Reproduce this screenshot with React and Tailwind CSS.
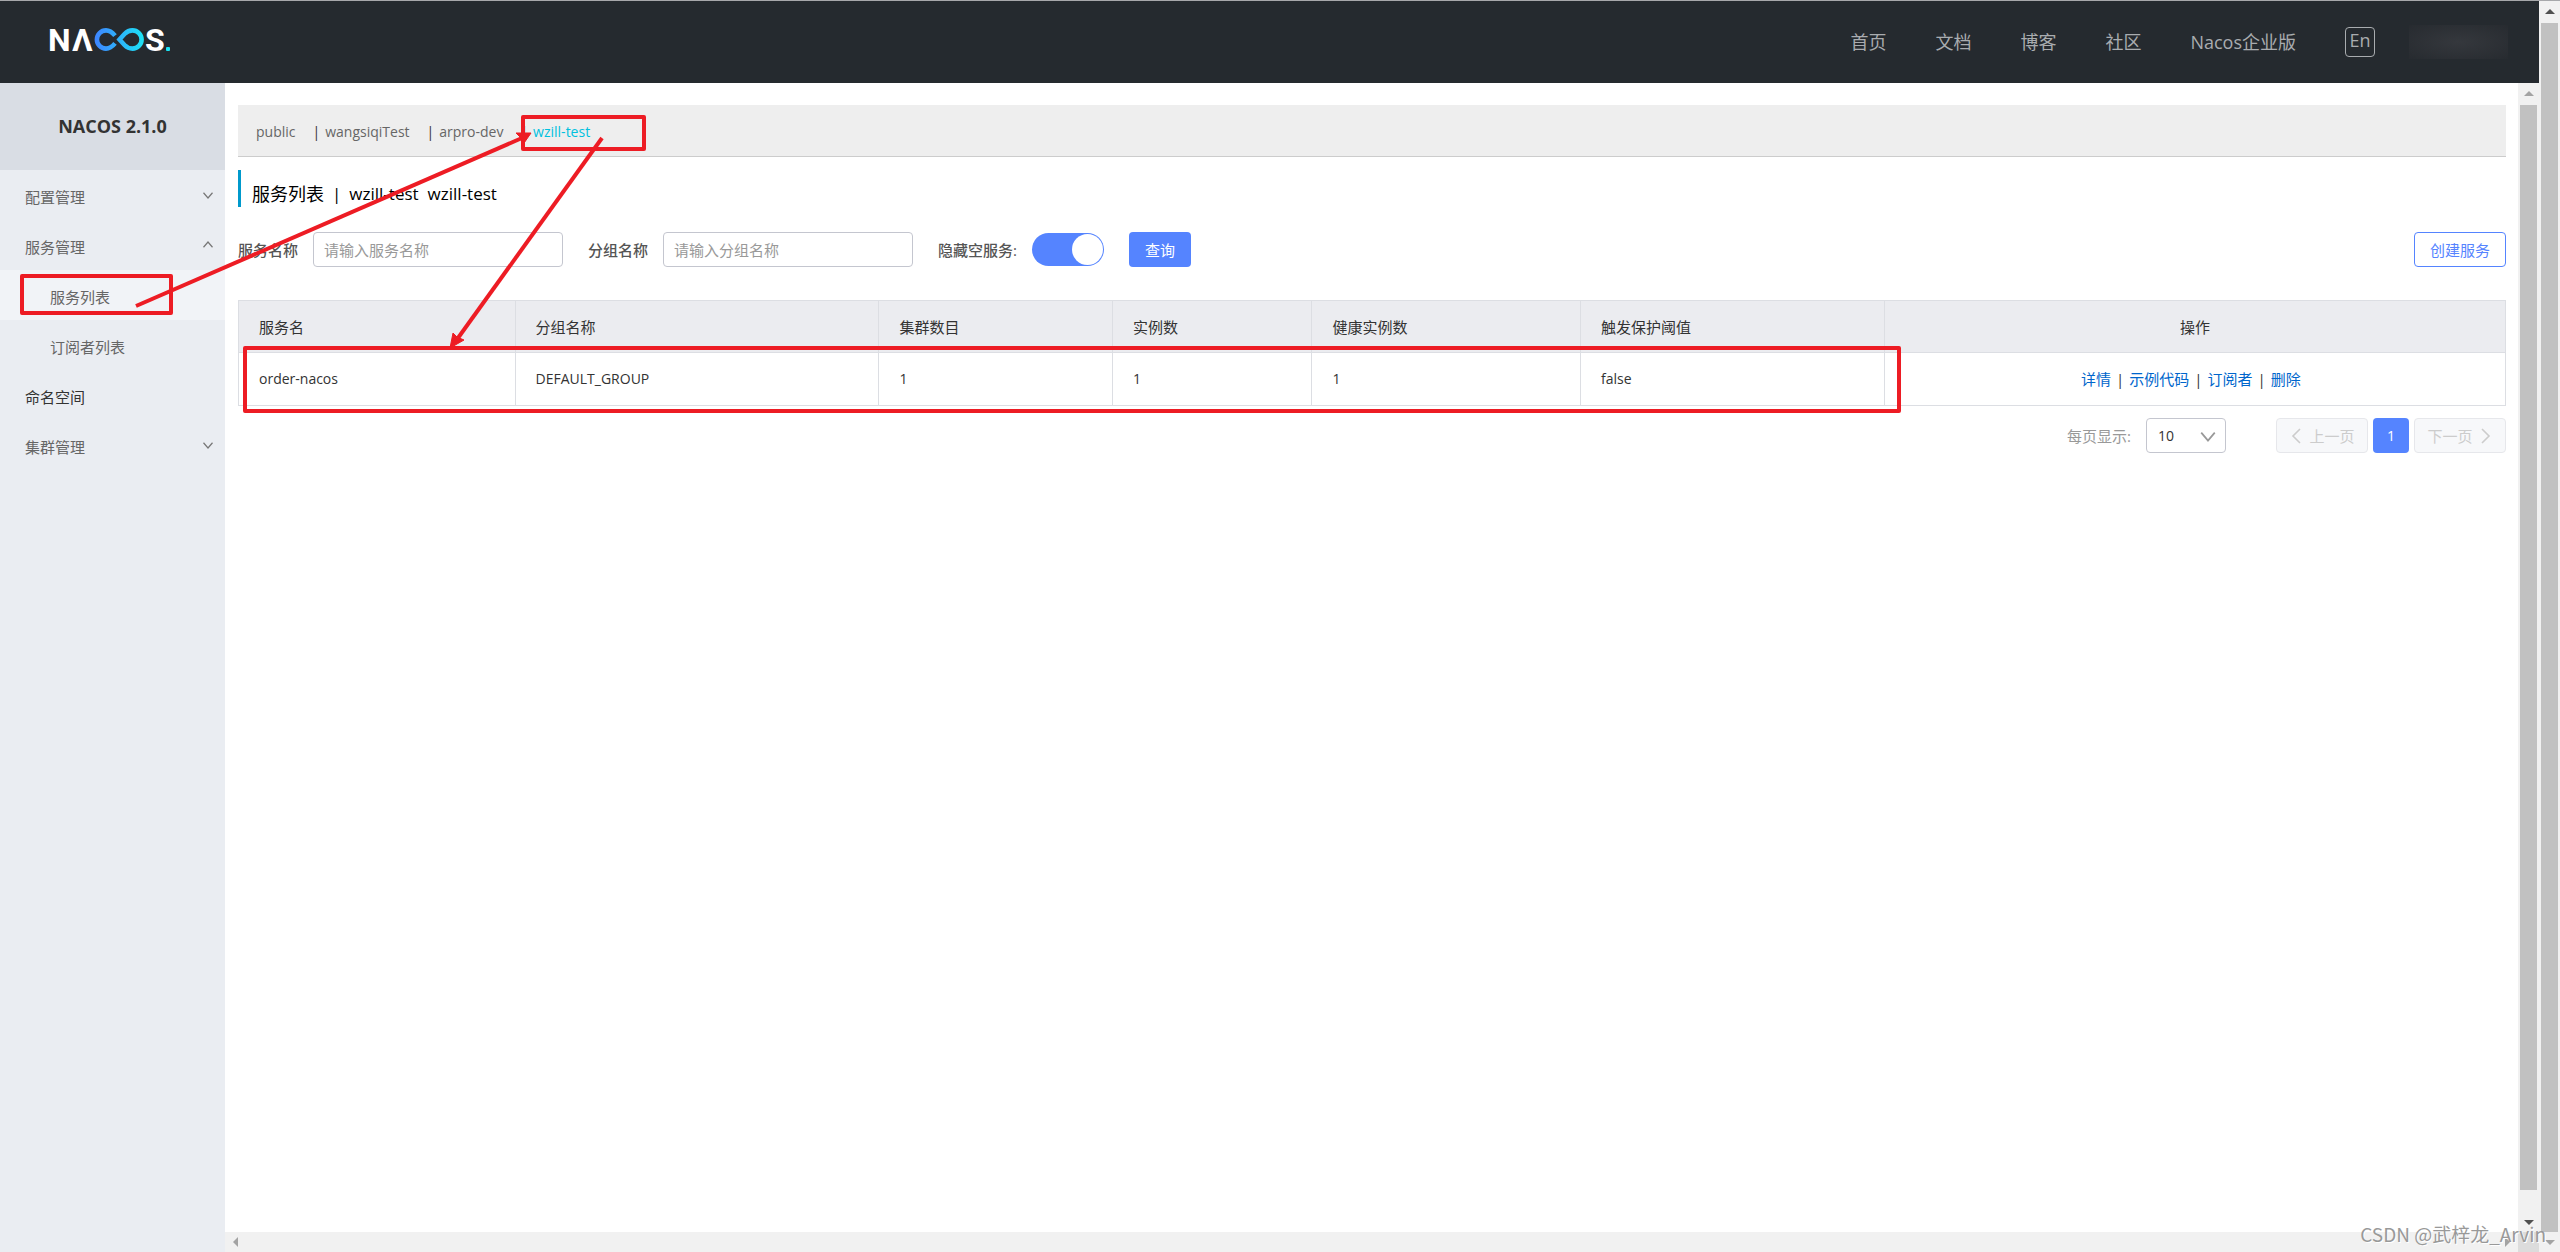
import { useState } from 'react'

const navLinks = ['首页', '文档', '博客', '社区', 'Nacos企业版']

const menus = [
  { name: '配置管理', arrow: 'down' },
  { name: '服务管理', arrow: 'up' },
  { name: '服务列表', sub: true, active: true },
  { name: '订阅者列表', sub: true },
  { name: '命名空间', dark: true },
  { name: '集群管理', arrow: 'down' },
]

const namespaces = ['public', 'wangsiqiTest', 'arpro-dev', 'wzill-test']

const columns = [
  { title: '服务名', key: 'name', width: 'w-[12.2%]' },
  { title: '分组名称', key: 'groupName', width: 'w-[16.05%]' },
  { title: '集群数目', key: 'clusterCount', width: 'w-[10.3%]' },
  { title: '实例数', key: 'ipCount', width: 'w-[8.8%]' },
  { title: '健康实例数', key: 'healthyInstanceCount', width: 'w-[11.85%]' },
  { title: '触发保护阈值', key: 'triggerFlag', width: 'w-[13.4%]' },
]

const services = [
  {
    name: 'order-nacos',
    groupName: 'DEFAULT_GROUP',
    clusterCount: 1,
    ipCount: 1,
    healthyInstanceCount: 1,
    triggerFlag: 'false',
  },
]

const operations = ['详情', '示例代码', '订阅者', '删除']

function Chevron({ dir, className }) {
  const paths = {
    down: 'M2 5 L8 12 L14 5',
    up: 'M2 11 L8 4 L14 11',
    left: 'M11 1 L4 8 L11 15',
    right: 'M5 1 L12 8 L5 15',
  }
  return (
    <svg viewBox="0 0 16 16" className={className} fill="none" stroke="currentColor" strokeWidth="1.6" aria-hidden="true">
      <path d={paths[dir]} />
    </svg>
  )
}

function Logo() {
  return (
    <svg viewBox="0 0 122 24" className="h-6 w-[122px] overflow-visible" role="img" aria-label="NACOS">
      <defs>
        <linearGradient id="loop" x1="44" x2="95" y1="0" y2="0" gradientUnits="userSpaceOnUse">
          <stop offset="0" stopColor="#3f83ff" />
          <stop offset="1" stopColor="#1be4f5" />
        </linearGradient>
      </defs>
      <g className="fill-white font-['Roboto',sans-serif] text-[32px] font-bold">
        <text x="-2" y="23">N</text>
        <text x="22" y="23">Λ</text>
        <text x="95" y="23">S</text>
      </g>
      <g fill="none" stroke="url(#loop)" strokeWidth="4.6">
        <path d="M65 7.6 C62 4 59.5 2.4 56 2.4 A9.1 9.1 0 1 0 56 20.6 C59.5 20.6 62 19 65 15.4" />
        <path d="M69.5 11.5 L74.5 6 C77 3.4 79.5 2.4 82.5 2.4 A9.1 9.1 0 1 1 82.5 20.6 C79.5 20.6 77 19.6 74.5 17 Z" />
      </g>
      <rect x="116" y="19" width="4" height="4" rx="1" fill="#1be4f5" />
    </svg>
  )
}

function Triangle({ dir, className }) {
  const points = {
    up: '0,7 5,2 10,7',
    down: '0,3 5,8 10,3',
    left: '7,0 2,5 7,10',
    right: '3,0 8,5 3,10',
  }
  return (
    <svg viewBox="0 0 10 10" className={'size-[10px] shrink-0 ' + className} fill="currentColor" aria-hidden="true">
      <polygon points={points[dir]} />
    </svg>
  )
}

function VerticalScrollbar({ upColor, downColor, thumb }) {
  return (
    <div className="flex w-[21px] shrink-0 flex-col items-center bg-[#f1f1f1]">
      <div className="flex h-[22px] items-center"><Triangle dir="up" className={upColor} /></div>
      <div className="flex w-full flex-1 flex-col px-[2px]">
        <div className={'bg-[#c1c1c1] ' + thumb} />
      </div>
      <div className="flex h-5 items-center"><Triangle dir="down" className={downColor} /></div>
    </div>
  )
}

function Header() {
  return (
    <header className="flex h-[82px] shrink-0 items-center justify-between bg-[#252a2f] pr-[31px] pb-px pl-[50px]">
      <a href="#" className="block pb-1"><Logo /></a>
      <nav className="flex items-center text-[18px] text-[#a9acaf]">
        {navLinks.map((l) => (
          <a key={l} href="#" className="mr-[49px]">{l}</a>
        ))}
        <button className="mr-[34px] h-[30px] w-[30px] rounded-sm border border-[#a9acaf] pb-1 text-[18px] leading-6">En</button>
        <div className="h-[34px] w-[99px] bg-radial from-[#35383d] to-[#272b30]" />
      </nav>
    </header>
  )
}

function Sidebar() {
  return (
    <aside className="w-[225px] shrink-0 bg-[#eaedf2]">
      <h1 className="flex h-[87px] items-center justify-center bg-[#d9dde4] pb-[2px] text-[18px] font-bold text-[#333]">NACOS 2.1.0</h1>
      <ul>
        {menus.map((m) => (
          <li key={m.name} className={m.active ? 'bg-[#f1f3f7]' : ''}>
            <a
              href="#"
              className={
                'flex h-[50px] items-center justify-between pt-1 pr-[11px] ' +
                (m.sub ? 'pl-[50px] ' : 'pl-[25px] ') +
                (m.dark ? 'text-[#333]' : 'text-[#666]')
              }
            >
              {m.name}
              {m.arrow && <Chevron dir={m.arrow} className="mb-1 size-3 text-[#777]" />}
            </a>
          </li>
        ))}
      </ul>
    </aside>
  )
}

function Filters() {
  const [hideEmpty, setHideEmpty] = useState(true)
  const input = 'h-[35px] w-[250px] rounded-[4px] border border-[#c4c6cf] bg-white px-[10px] placeholder:text-[#999] focus:outline-none'
  return (
    <form className="mt-[25px] flex h-[35px] items-center" onSubmit={(e) => e.preventDefault()}>
      <label htmlFor="serviceName" className="mr-[15px] font-medium text-[#555]">服务名称</label>
      <input id="serviceName" className={input} placeholder="请输入服务名称" />
      <label htmlFor="groupName" className="mr-[15px] ml-[25px] font-medium text-[#555]">分组名称</label>
      <input id="groupName" className={input} placeholder="请输入分组名称" />
      <label htmlFor="hideEmpty" className="mr-[15px] ml-[25px] font-medium text-[#555]">隐藏空服务:</label>
      <input
        id="hideEmpty"
        type="checkbox"
        checked={hideEmpty}
        onChange={(e) => setHideEmpty(e.target.checked)}
        className="flex h-[33px] w-[72px] appearance-none items-center rounded-full bg-[#c4c6cf] px-px before:size-[31px] before:rounded-full before:bg-white checked:justify-end checked:bg-[#5584ff]"
      />
      <button className="ml-[25px] h-[35px] w-[62px] rounded-[4px] bg-[#5584ff] text-white">查询</button>
      <button type="button" className="ml-auto h-[35px] w-[92px] rounded-[4px] border border-[#5584ff] bg-white text-[#5584ff]">创建服务</button>
    </form>
  )
}

function ServiceTable() {
  const cell = 'border border-[#dcdee3] px-5 text-left font-normal '
  return (
    <table className="mt-[33px] w-full table-fixed border-collapse text-[#333]">
      <thead>
        <tr className="h-[52px] bg-[#ebecf0]">
          {columns.map((c) => (
            <th key={c.key} className={cell + c.width}>{c.title}</th>
          ))}
          <th className="border border-[#dcdee3] text-center font-normal">操作</th>
        </tr>
      </thead>
      <tbody>
        {services.map((s) => (
          <tr key={s.name} className="h-[53px]">
            {columns.map((c) => (
              <td key={c.key} className={cell + 'text-sm'}>{s[c.key]}</td>
            ))}
            <td className="border border-[#dcdee3] pr-2 text-center">
              {operations.map((o, i) => (
                <span key={o}>
                  {i > 0 && <span className="mx-[5px]">|</span>}
                  <a href="#" className="text-[#06c]">{o}</a>
                </span>
              ))}
            </td>
          </tr>
        ))}
      </tbody>
    </table>
  )
}

function Pagination() {
  const disabled = 'flex h-[35px] w-[92px] items-center justify-center gap-1 rounded-[4px] border border-[#e6e7eb] bg-[#f7f8fa] text-[#ccc]'
  return (
    <div className="mt-3 flex items-center justify-end gap-[5px]">
      <label htmlFor="pageSize" className="mr-[10px] text-[#999]">每页显示:</label>
      <div className="relative mr-[45px]">
        <select id="pageSize" className="h-[35px] w-20 appearance-none rounded-[4px] border border-[#c4c6cf] bg-white px-[11px] text-sm text-[#333]">
          <option>10</option>
          <option>20</option>
          <option>50</option>
        </select>
        <Chevron dir="down" className="pointer-events-none absolute top-[9px] right-[9px] size-[18px] text-[#999]" />
      </div>
      <button disabled className={disabled}><Chevron dir="left" className="size-4" />上一页</button>
      <button className="h-[35px] w-9 rounded-[4px] bg-[#5584ff] text-sm text-white">1</button>
      <button disabled className={disabled}>下一页<Chevron dir="right" className="size-4" /></button>
    </div>
  )
}

// red boxes and arrows drawn over the console
function Annotations() {
  return (
    <svg viewBox="0 0 2560 1252" width="2560" height="1252" className="pointer-events-none absolute top-0 left-0" fill="none" stroke="#ed1c24" strokeWidth="4" strokeLinejoin="round" aria-hidden="true">
      <rect x="22" y="276" width="149" height="37" />
      <rect x="523" y="117" width="121" height="32" />
      <rect x="245" y="348" width="1654" height="63" />
      <path d="M136 306 L522 138" />
      <path d="M602 138 L458 338" />
      <path d="M531 133 L516 133 L521 138 L522 146 Z" fill="#ed1c24" strokeWidth="1" />
      <path d="M450 348 L453 333 L457 337 L464 340 Z" fill="#ed1c24" strokeWidth="1" />
    </svg>
  )
}

export default function App() {
  const [current, setCurrent] = useState('wzill-test')
  return (
    <div className="relative flex h-screen w-full flex-col overflow-hidden bg-white font-['Open_Sans','Noto_Sans_CJK_SC',sans-serif] text-[15px] leading-5">
      <div className="h-px shrink-0 bg-[#a7a8ab]" />
      <div className="flex min-h-0 flex-1">
        <div className="flex min-w-0 flex-1 flex-col">
          <Header />
          <div className="flex min-h-0 flex-1">
            <Sidebar />
            <div className="flex min-w-0 flex-1 flex-col">
              <div className="flex min-h-0 flex-1">
                <main className="min-w-0 flex-1 pt-[22px] pr-3 pl-[13px]">
                  <div className="flex h-[52px] items-center border-b border-[#ccc] bg-[#eee] pt-[3px] pl-[18px] text-sm">
                    {namespaces.map((n, i) => (
                      <div key={n} className="flex items-center">
                        {i > 0 && <span className="mr-[5px] text-[#333]">|</span>}
                        <button
                          onClick={() => setCurrent(n)}
                          className={'mr-[17px] ' + (n === current ? 'text-[#00c1de]' : 'text-[#666]')}
                        >
                          {n}
                        </button>
                      </div>
                    ))}
                  </div>
                  <h2 className="mt-[13px] flex h-[37px] items-center border-l-[3px] border-[#09c] pt-[10px] pl-[11px] text-[17px] text-black">
                    <span className="text-[18px]">服务列表</span>
                    <span className="mx-2">|</span>
                    <span className="mr-[9px]">{current}</span>
                    <span>{current}</span>
                  </h2>
                  <Filters />
                  <ServiceTable />
                  <Pagination />
                </main>
                <VerticalScrollbar upColor="text-[#a3a3a3]" downColor="text-[#505050]" thumb="h-[98%]" />
              </div>
              <div className="flex h-5 shrink-0 bg-[#f1f1f1]">
                <div className="flex flex-1 items-center justify-between px-[6px]">
                  <Triangle dir="left" className="text-[#a3a3a3]" />
                  <Triangle dir="right" className="text-[#a3a3a3]" />
                </div>
                <div className="w-[21px] bg-[#dcdcdc]" />
              </div>
            </div>
          </div>
        </div>
        <VerticalScrollbar upColor="text-[#505050]" downColor="text-[#a3a3a3]" thumb="h-full" />
      </div>
      <Annotations />
      <p className="absolute right-[14px] bottom-[6px] font-['Noto_Sans_CJK_SC',sans-serif] text-[19px] leading-6 text-[#999] [text-shadow:1px_1px_0_#fff]">
        CSDN @武梓龙_Arvin
      </p>
    </div>
  )
}
